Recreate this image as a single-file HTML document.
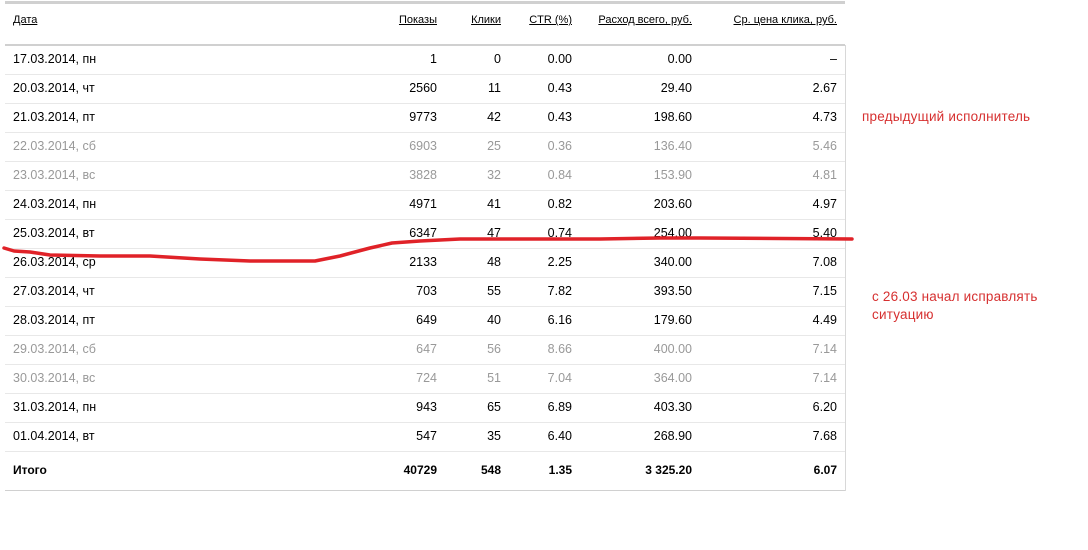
<!DOCTYPE html>
<html><head><meta charset="utf-8"><style>
body{margin:0;width:1088px;height:550px;background:#fff;position:relative;overflow:hidden;font-family:"Liberation Sans",Arial,sans-serif;font-size:12.5px;color:#000}
.top{position:absolute;left:5px;top:1px;width:840px;height:3px;background:#d0d0d0}
.hl{position:absolute;left:5px;width:840px;height:1px;background:#e8e8e8}
.vl{position:absolute;left:845px;top:45px;width:1px;height:446px;background:#d8d8d8}
.r{position:absolute;left:0;width:850px;height:29px;line-height:29px}
.r span{position:absolute;white-space:nowrap}
.g{color:#999}
.h{font-size:11px;color:#000}
.h span{text-decoration:underline}
.c0{left:13px}
.c1{right:413px}.c2{right:349px}.c3{right:278px}.c4{right:158px}.c5{right:13px}
.b{font-weight:bold;font-size:12px}
.note{position:absolute;color:#d63030;font-size:13.5px;letter-spacing:0.2px;font-family:"Liberation Sans",sans-serif;line-height:18px}
</style></head><body>
<div class="top"></div>
<div class="r h" style="top:6px"><span class="c0">Дата</span><span class="c1">Показы</span><span class="c2">Клики</span><span class="c3">CTR (%)</span><span class="c4">Расход всего, руб.</span><span class="c5">Ср. цена клика, руб.</span></div>
<div class="hl" style="top:44px;height:2px;background:#d0d0d0"></div>
<div class="vl"></div>

<div class="r" style="top:45px"><span class="c0">17.03.2014, пн</span><span class="c1">1</span><span class="c2">0</span><span class="c3">0.00</span><span class="c4">0.00</span><span class="c5">–</span></div>
<div class="hl" style="top:74px"></div>
<div class="r" style="top:74px"><span class="c0">20.03.2014, чт</span><span class="c1">2560</span><span class="c2">11</span><span class="c3">0.43</span><span class="c4">29.40</span><span class="c5">2.67</span></div>
<div class="hl" style="top:103px"></div>
<div class="r" style="top:103px"><span class="c0">21.03.2014, пт</span><span class="c1">9773</span><span class="c2">42</span><span class="c3">0.43</span><span class="c4">198.60</span><span class="c5">4.73</span></div>
<div class="hl" style="top:132px"></div>
<div class="r g" style="top:132px"><span class="c0">22.03.2014, сб</span><span class="c1">6903</span><span class="c2">25</span><span class="c3">0.36</span><span class="c4">136.40</span><span class="c5">5.46</span></div>
<div class="hl" style="top:161px"></div>
<div class="r g" style="top:161px"><span class="c0">23.03.2014, вс</span><span class="c1">3828</span><span class="c2">32</span><span class="c3">0.84</span><span class="c4">153.90</span><span class="c5">4.81</span></div>
<div class="hl" style="top:190px"></div>
<div class="r" style="top:190px"><span class="c0">24.03.2014, пн</span><span class="c1">4971</span><span class="c2">41</span><span class="c3">0.82</span><span class="c4">203.60</span><span class="c5">4.97</span></div>
<div class="hl" style="top:219px"></div>
<div class="r" style="top:219px"><span class="c0">25.03.2014, вт</span><span class="c1">6347</span><span class="c2">47</span><span class="c3">0.74</span><span class="c4">254.00</span><span class="c5">5.40</span></div>
<div class="hl" style="top:248px"></div>
<div class="r" style="top:248px"><span class="c0">26.03.2014, ср</span><span class="c1">2133</span><span class="c2">48</span><span class="c3">2.25</span><span class="c4">340.00</span><span class="c5">7.08</span></div>
<div class="hl" style="top:277px"></div>
<div class="r" style="top:277px"><span class="c0">27.03.2014, чт</span><span class="c1">703</span><span class="c2">55</span><span class="c3">7.82</span><span class="c4">393.50</span><span class="c5">7.15</span></div>
<div class="hl" style="top:306px"></div>
<div class="r" style="top:306px"><span class="c0">28.03.2014, пт</span><span class="c1">649</span><span class="c2">40</span><span class="c3">6.16</span><span class="c4">179.60</span><span class="c5">4.49</span></div>
<div class="hl" style="top:335px"></div>
<div class="r g" style="top:335px"><span class="c0">29.03.2014, сб</span><span class="c1">647</span><span class="c2">56</span><span class="c3">8.66</span><span class="c4">400.00</span><span class="c5">7.14</span></div>
<div class="hl" style="top:364px"></div>
<div class="r g" style="top:364px"><span class="c0">30.03.2014, вс</span><span class="c1">724</span><span class="c2">51</span><span class="c3">7.04</span><span class="c4">364.00</span><span class="c5">7.14</span></div>
<div class="hl" style="top:393px"></div>
<div class="r" style="top:393px"><span class="c0">31.03.2014, пн</span><span class="c1">943</span><span class="c2">65</span><span class="c3">6.89</span><span class="c4">403.30</span><span class="c5">6.20</span></div>
<div class="hl" style="top:422px"></div>
<div class="r" style="top:422px"><span class="c0">01.04.2014, вт</span><span class="c1">547</span><span class="c2">35</span><span class="c3">6.40</span><span class="c4">268.90</span><span class="c5">7.68</span></div>
<div class="hl" style="top:451px"></div>
<div class="r b" style="top:456px"><span class="c0">Итого</span><span class="c1">40729</span><span class="c2">548</span><span class="c3">1.35</span><span class="c4">3 325.20</span><span class="c5">6.07</span></div>
<div class="hl" style="top:490px;background:#d0d0d0"></div>

<svg style="position:absolute;left:0;top:0" width="1088" height="550">
<path d="M4,248 L14,251 L30,252 L50,255 L100,256 L150,256 L200,259 L250,261 L315,261 L340,256 L370,248 L392,243 L420,241 L460,239 L520,239 L600,239 L660,238 L700,238 L852,239" fill="none" stroke="#e02228" stroke-width="3.5" stroke-linejoin="round" stroke-linecap="round"/>
</svg>

<div class="note" style="left:862px;top:108px">предыдущий исполнитель</div>
<div class="note" style="left:872px;top:288px">с 26.03 начал исправлять<br>ситуацию</div>
</body></html>
